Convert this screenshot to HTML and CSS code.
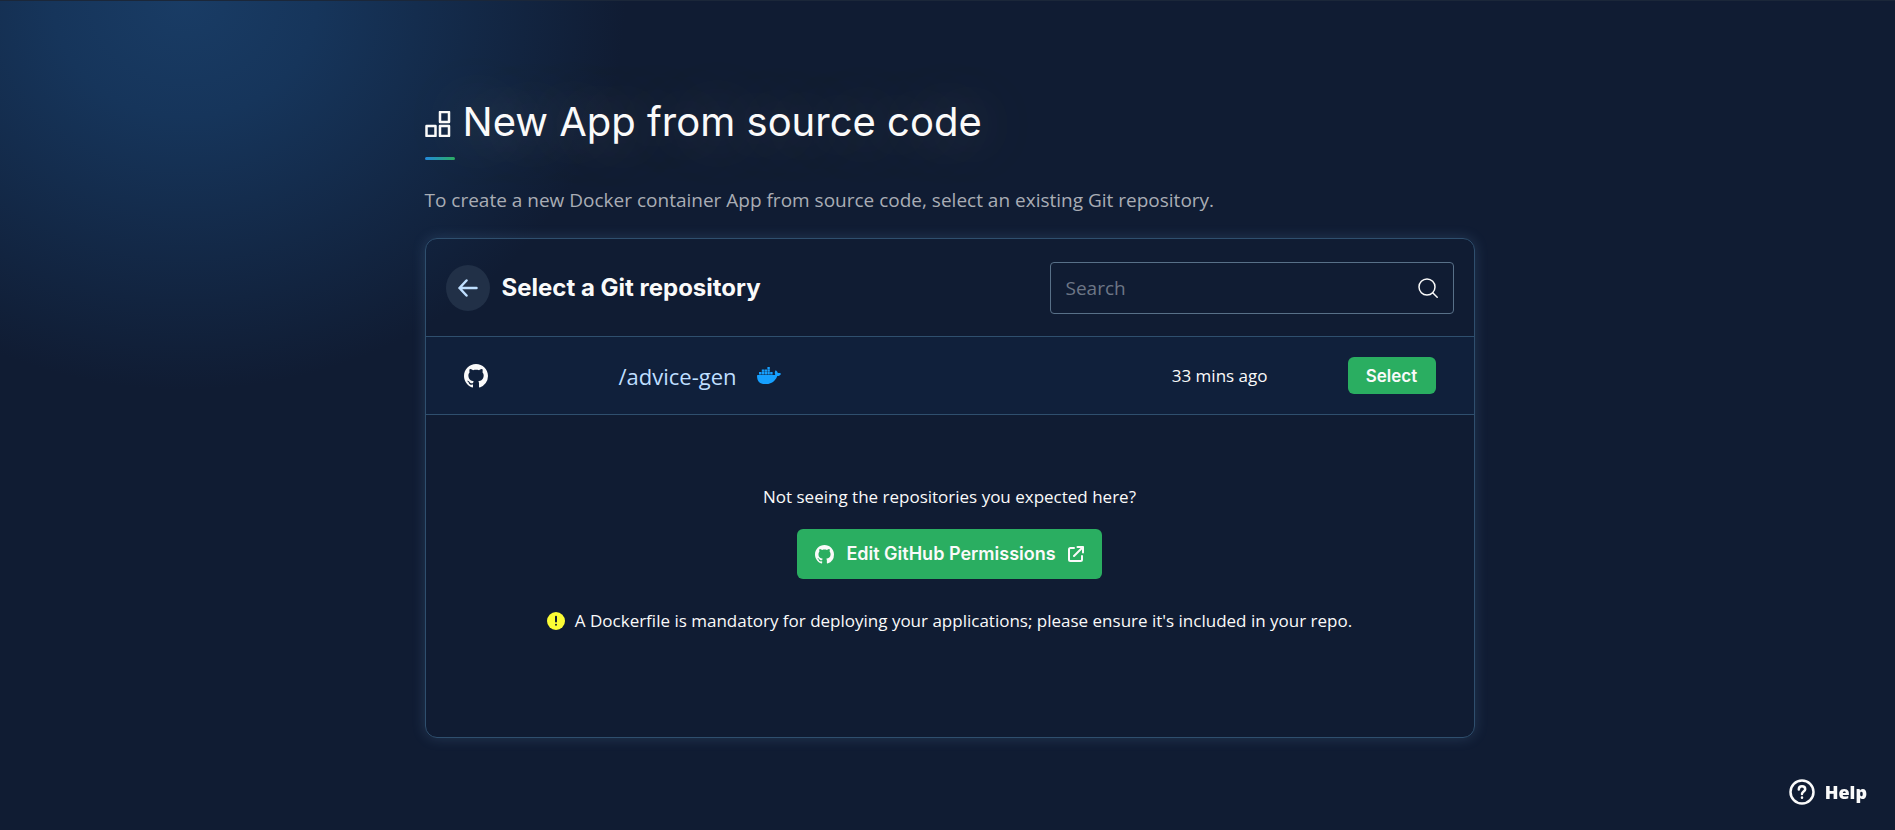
FILE: index.html
```html
<!DOCTYPE html>
<html lang="en">

<head>
    <meta charset="UTF-8" />
    <meta name="viewport" content="width=device-width, initial-scale=1.0" />
    <title>New App from source code</title>
    <link rel="stylesheet" href="styles.css">
</head>

<body>
    <!-- shared icon, used in the list and in the button -->
    <svg class="sprite" aria-hidden="true">
        <symbol id="github" viewBox="0 0 16 16">
            <path fill="currentColor" d="M8 0C3.58 0 0 3.58 0 8c0 3.54 2.29 6.53 5.47 7.59.4.07.55-.17.55-.38 0-.19-.01-.82-.01-1.49-2.01.37-2.53-.49-2.69-.94-.09-.23-.48-.94-.82-1.13-.28-.15-.68-.52-.01-.53.63-.01 1.08.58 1.23.82.72 1.21 1.87.87 2.33.66.07-.52.28-.87.51-1.07-1.78-.2-3.64-.89-3.64-3.95 0-.87.31-1.59.82-2.15-.08-.2-.36-1.02.08-2.12 0 0 .67-.21 2.2.82.64-.18 1.32-.27 2-.27s1.36.09 2 .27c1.53-1.04 2.2-.82 2.2-.82.44 1.1.16 1.92.08 2.12.51.56.82 1.27.82 2.15 0 3.07-1.87 3.75-3.65 3.95.29.25.54.73.54 1.48 0 1.07-.01 1.93-.01 2.2 0 .21.15.46.55.38A8.01 8.01 0 0 0 16 8c0-4.42-3.58-8-8-8z" />
        </symbol>
    </svg>

    <main class="page">
        <h1 class="title">
            <svg class="titleIcon" viewBox="0 0 26 26" fill="none" stroke="currentColor" stroke-width="2.500" stroke-linejoin="round" aria-hidden="true">
                <rect x="15" y="1" width="9" height="10" />
                <rect x="1.500" y="15" width="9" height="10" />
                <rect x="15" y="15" width="9" height="10" />
            </svg>
            New App from source code
        </h1>
        <p class="intro">To create a new Docker container App from source code, select an existing Git repository.</p>

        <section class="card">
            <header class="cardHeader">
                <button class="backBtn" aria-label="Back">
                    <svg viewBox="0 0 20 18" width="20" height="18" fill="none" stroke="currentColor" stroke-width="2.500" stroke-linecap="round" stroke-linejoin="round">
                        <path d="M18.500 9H1.500M8.500 1.500L1.500 9l7 7.500" />
                    </svg>
                </button>
                <h2 class="cardTitle">Select a Git repository</h2>
                <div class="search">
                    <input type="search" placeholder="Search" aria-label="Search" />
                    <svg viewBox="0 0 20 20" width="20" height="20" fill="none" stroke="currentColor" stroke-width="1.500" stroke-linecap="round" aria-hidden="true">
                        <circle cx="9" cy="9" r="8" />
                        <path d="M14.700 14.700l4.500 4.500" />
                    </svg>
                </div>
            </header>

            <div class="repo">
                <svg class="repoIcon" aria-hidden="true"><use href="#github" /></svg>
                <span class="repoName">/advice-gen</span>
                <svg class="docker" viewBox="0 0 24 17" aria-hidden="true">
                    <path fill="currentColor" d="M23.760 6.400c-.07-.05-.67-.51-1.950-.51-.34 0-.68.03-1.010.09-.25-1.710-1.660-2.540-1.720-2.580l-.35-.2-.23.33c-.28.44-.49.930-.61 1.440-.23.970-.09 1.880.4 2.660-.59.330-1.550.410-1.740.420H.750a.75.75 0 0 0-.75.750c-.02 1.400.22 2.790.7 4.100.55 1.430 1.360 2.490 2.410 3.140 1.180.72 3.100 1.130 5.280 1.130.98 0 1.960-.09 2.930-.27 1.350-.25 2.640-.71 3.830-1.390.98-.57 1.860-1.290 2.610-2.140 1.250-1.420 2-3 2.550-4.400h.22c1.370 0 2.220-.55 2.680-1.010.31-.29.550-.65.710-1.050L24 6.620z" />
                    <path fill="currentColor" d="M2 5h2.400v2.500H2zM4.800 5h2.400v2.500H4.800zM7.600 5h2.400v2.500H7.600zM10.400 5h2.400v2.500h-2.400zM13.200 5h2.400v2.500h-2.400zM4.800 2.500h2.400v2.200H4.800zM7.600 2.500h2.400v2.200H7.600zM10.400 2.500h2.400v2.200h-2.400zM10.400 0h2.400v2.200h-2.400z" />
                </svg>
                <span class="repoTime">33 mins ago</span>
                <button class="btn selectBtn">Select</button>
            </div>

            <div class="cardBody">
                <p>Not seeing the repositories you expected here?</p>
                <button class="btn editBtn">
                    <svg class="btnIcon" aria-hidden="true"><use href="#github" /></svg>
                    Edit GitHub Permissions
                    <svg class="extIcon" viewBox="0 0 16 16" fill="none" stroke="currentColor" stroke-width="2" stroke-linecap="round" stroke-linejoin="round" aria-hidden="true">
                        <path d="M6 2H2.500C1.700 2 1 2.700 1 3.500v10c0 .8.700 1.500 1.500 1.500h10c.8 0 1.500-.7 1.500-1.500V10M9.500 1H15v5.500M15 1L6 10" />
                    </svg>
                </button>
                <p class="notice">
                    <svg viewBox="0 0 18 18" width="18" height="18" aria-hidden="true">
                        <circle cx="9" cy="9" r="9" fill="#fcfc35" />
                        <path d="M9 4.800v4.700M9 12.700v.1" stroke="#111c32" stroke-width="2" stroke-linecap="round" />
                    </svg>
                    A Dockerfile is mandatory for deploying your applications; please ensure it's included in your repo.
                </p>
            </div>
        </section>
    </main>

    <button class="help">
        <svg viewBox="0 0 26 26" width="26" height="26" fill="none" stroke="currentColor" stroke-width="2.500" stroke-linecap="round" aria-hidden="true">
            <circle cx="13" cy="13" r="11.500" />
            <path d="M9.800 10.500c0-1.900 1.400-3.200 3.200-3.200s3.200 1.200 3.200 2.900c0 2.300-3.200 2.500-3.200 4.800M13 18.600v.1" />
        </svg>
        Help
    </button>
</body>

</html>
```
FILE: styles.css
```css
:root {
    --bg: #101c33;
    --row: #10203b;
    --line: #2f4f6e;
    --green: #2aae61;
    --light-blue: #bfdfff;
    --text: #fafafa;
    --base-font: "Open Sans", sans-serif;
    --head-font: Inter, sans-serif;
}

* {
    box-sizing: border-box;
}

body {
    margin: 0;
    min-height: 100vh;
    color: var(--text);
    font-family: var(--base-font);
    font-size: 17px;
    line-height: 24px;
    border-top: 1px solid #1b2739;
    background: radial-gradient(ellipse 440px 390px at 185px 0, #193c65, #16355b 30%, #101c3300) no-repeat, var(--bg);
}

h1,
h2,
p {
    margin: 0;
}

button {
    font-family: var(--head-font);
    color: var(--text);
    border: none;
    cursor: pointer;
}

.sprite {
    display: none;
}

.page {
    max-width: 1098px;
    margin: 0 auto;
    padding: 93px 22px 92px 26px;
}

.title {
    display: flex;
    align-items: center;
    gap: 12px;
    font-family: var(--head-font);
    font-size: 40px;
    line-height: 56px;
    font-weight: 400;
    text-shadow: 0 0 60px #ffe6b466;
}

.titleIcon {
    width: 26px;
    height: 26px;
    margin-top: 4px;
}

.intro {
    color: #a9adb5;
    font-size: 19px;
    line-height: 28px;
}

.intro::before {
    content: "";
    display: block;
    width: 30px;
    height: 3px;
    margin: 7px 0 26px;
    border-radius: 2px;
    background: linear-gradient(90deg, #2389dd, var(--green));
}

.card {
    min-height: 500px;
    margin-top: 24px;
    border: 1px solid var(--line);
    border-radius: 12px;
    box-shadow: 0 0 14px #78aadc33;
    overflow: hidden;
}

.cardHeader {
    display: flex;
    align-items: center;
    gap: 12px;
    padding: 23px 20px 22px;
    border-bottom: 1px solid var(--line);
}

.backBtn {
    display: flex;
    align-items: center;
    justify-content: center;
    width: 44px;
    height: 46px;
    padding: 0;
    border-radius: 50%;
    color: var(--light-blue);
    background: #213047;
}

.cardTitle {
    flex: 1;
    font-family: var(--head-font);
    font-size: 24px;
    line-height: 32px;
    font-weight: 700;
}

.search {
    display: flex;
    align-items: center;
    width: 404px;
    height: 52px;
    padding: 0 15px;
    border: 1px solid #587088;
    border-radius: 4px;
}

.search input {
    flex: 1;
    min-width: 0;
    padding: 0;
    border: none;
    outline: none;
    color: var(--text);
    font-family: var(--base-font);
    font-size: 19px;
    background: transparent;
}

.search input::placeholder {
    color: #6d7686;
}

.repo {
    display: flex;
    align-items: center;
    height: 78px;
    padding: 0 38px;
    border-bottom: 1px solid var(--line);
    background: var(--row);
}

.repoIcon {
    width: 24px;
    height: 24px;
}

.repoName {
    margin-left: 131px;
    color: var(--light-blue);
    font-size: 22px;
}

.docker {
    width: 24px;
    height: 17px;
    margin-left: 20px;
    color: #16a0ff;
}

.repoTime {
    margin-left: auto;
    margin-right: 80px;
}

.btn {
    font-size: 17px;
    line-height: 24px;
    font-weight: 600;
    border-radius: 6px;
    background: var(--green);
}

.selectBtn {
    width: 88px;
    height: 37px;
    padding: 0;
}

.cardBody {
    display: flex;
    flex-direction: column;
    align-items: center;
    padding: 70px 20px;
}

.editBtn {
    display: flex;
    align-items: center;
    gap: 12px;
    height: 50px;
    margin: 20px 0 30px;
    padding: 0 18px;
    font-size: 18px;
}

.btnIcon {
    width: 19px;
    height: 19px;
}

.extIcon {
    width: 16px;
    height: 16px;
}

.notice {
    display: flex;
    align-items: center;
    gap: 10px;
}

.help {
    position: fixed;
    right: 28px;
    bottom: 25px;
    display: flex;
    align-items: center;
    gap: 10px;
    padding: 0;
    font-family: var(--base-font);
    font-size: 18px;
    font-weight: 800;
    background: none;
}
```
